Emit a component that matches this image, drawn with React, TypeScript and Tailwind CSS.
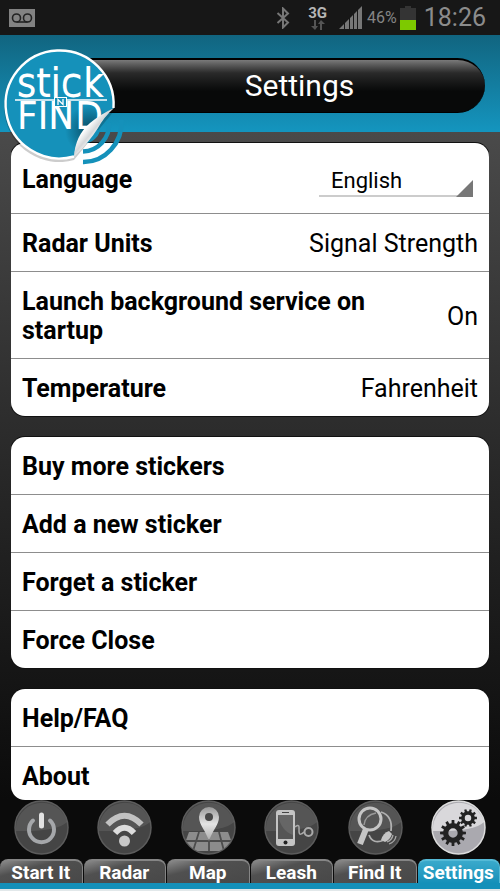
import React from 'react';
import clsx from 'clsx';

// Status bar at the top of the phone
function StatusBar() {
  return (
    <div className="flex h-[35px] shrink-0 items-center justify-between bg-[#171717] pr-[14px] pl-[9px] text-[#8a8a8a]">
      <svg width="26" height="18" viewBox="0 0 26 18" aria-label="Voicemail">
        <rect width="26" height="18" fill="#828282" />
        <g fill="none" stroke="#222" strokeWidth="1.6">
          <circle cx="7.5" cy="9" r="4" />
          <circle cx="18.5" cy="9" r="4" />
          <path d="M7.5 13h11" />
        </g>
      </svg>
      <div className="flex items-center">
        <svg className="mr-[18px]" width="14" height="22" viewBox="0 0 14 22" fill="none" stroke="#777" strokeWidth="2" aria-label="Bluetooth">
          <path d="M1.500 6 12 15.500 7 20.500V1.500L12 6.500 1.500 16" />
        </svg>
        <div className="mr-3 flex flex-col items-center">
          <span className="text-[15px] leading-[14px] font-bold text-[#b5b5b5]">3G</span>
          <svg width="14" height="10" viewBox="0 0 14 10" fill="#555">
            <path d="M3 0h2v6h2L4 10 0 6h3zM9 10h2V4h3L10 0 7 4h2z" />
          </svg>
        </div>
        <svg className="mr-1" width="24" height="23" viewBox="0 0 24 23" fill="#777" aria-label="Signal">
          <path d="M0 23 5 18V23zM6 23V17L10 13V23zM11 23V12L14 9V23zM15 23V8L18 5V23zM19 23V4L23 0V23z" />
        </svg>
        <span className="mr-[3px] text-base text-[#858585]">46%</span>
        <svg className="mr-2" width="16" height="24" viewBox="0 0 16 24" aria-label="Battery">
          <path d="M5 0h6v2h5v12H0V2h5z" fill="#343434" />
          <path d="M0 14h16v10H0z" fill="#7dc900" />
        </svg>
        <span className="text-[25px] leading-none text-[#8c8c8c]">18:26</span>
      </div>
    </div>
  );
}

function Logo() {
  return (
    <svg className="absolute top-2 left-0 z-10" width="132" height="124" viewBox="0 43 132 124" role="img" aria-label="Stick N Find">
      <defs>
        <linearGradient id="peel" x1="0" y1="0" x2="1" y2="1">
          <stop offset="0.35" stopColor="#fff" />
          <stop offset="0.47" stopColor="#d5d8da" />
          <stop offset="0.58" stopColor="#fff" />
        </linearGradient>
        <radialGradient id="peelShade" gradientUnits="userSpaceOnUse" cx="90" cy="130" r="25">
          <stop offset="0.2" stopColor="#063f54" stopOpacity="0.7" />
          <stop offset="1" stopColor="#063f54" stopOpacity="0" />
        </radialGradient>
        <clipPath id="disc">
          <path d="M114 108A54.500 54.500 0 1 0 74 157Q76 136 92 123 102 115 114 108Z" />
        </clipPath>
      </defs>
      <path d="M114 108A55 55 0 1 0 74 157Z" fill="#000" opacity="0.2" transform="translate(0 3)" />
      <path d="M114 108A54.500 54.500 0 1 0 74 157Q76 136 92 123 102 115 114 108Z" fill="#1591ba" />
      <g clipPath="url(#disc)">
        <circle cx="90" cy="130" r="25" fill="url(#peelShade)" />
        <g fill="#fff" stroke="#fff" strokeWidth="1.800" textAnchor="middle" fontFamily="'DejaVu Sans', sans-serif" fontWeight="200">
          <text x="60" y="96" fontSize="37">stick</text>
          <text x="60" y="128" fontSize="36">FIND</text>
        </g>
        <path d="M15 100h92" stroke="#fff" strokeWidth="1.300" />
        <rect x="54.500" y="97.500" width="12" height="9" fill="#1591ba" stroke="#fff" />
        <path d="M58 105V99.500L63 104.500V99" stroke="#fff" strokeWidth="1.300" fill="none" />
      </g>
      <path d="M113.500 108A54 54 0 1 0 74 156.500" fill="none" stroke="#fff" strokeWidth="2.400" />
      <g fill="none" stroke="#1591ba" strokeWidth="4.500">
        <path d="M98 130A15 15 0 0 1 83 141" />
        <path d="M109 123A27 27 0 0 1 83 151.500" />
        <path d="M121.500 120A38 40 0 0 1 83 162" />
      </g>
      <path d="M74 157Q75 136 90 123 101 114 114 108 104 117 98 128 90 141 74 157Z" fill="url(#peel)" />
    </svg>
  );
}

function Header() {
  return (
    <header className="relative z-10 shrink-0 bg-linear-to-b from-[#116580] to-[#1495bf] pt-[23px] pr-[15px] pb-[19px] pl-12">
      <Logo />
      <div className="flex h-[55px] items-center justify-center rounded-r-full border-t-2 border-b border-black bg-linear-to-b from-[#7a7a7a] via-[#2a2a2a] via-25% to-[#080909] to-60% pl-[66px]">
        <h1 className="text-[30px] leading-none text-white">Settings</h1>
      </div>
    </header>
  );
}

function Card({ children }: { children: React.ReactNode }) {
  return (
    <section className="shrink-0 divide-y divide-[#8d8d8d] overflow-hidden rounded-[14px] bg-white shadow-[0_0_0_1px_#111]">
      {children}
    </section>
  );
}

interface RowProps {
  label: string;
  value?: string;
}

function Row({ label, value }: RowProps) {
  return (
    <button type="button" className="flex w-full items-center justify-between px-[11px] pt-[15px] pb-[13px] text-left">
      <span className="max-w-[370px] text-[25px] leading-[29px] font-bold">{label}</span>
      {value && <span className="text-[25px] leading-[29px]">{value}</span>}
    </button>
  );
}

function LanguageRow() {
  return (
    <div className="flex h-[71px] items-center justify-between pr-4 pl-[11px]">
      <label htmlFor="language" className="pt-[3px] text-[25px] leading-[29px] font-bold">Language</label>
      <div className="relative mt-1 w-[154px] border-b-2 border-[#ccc]">
        <select id="language" className="block w-full appearance-none bg-transparent pt-1 pl-3 text-[22px] leading-7 outline-none">
          <option>English</option>
        </select>
        <svg className="pointer-events-none absolute right-0 -bottom-[2px]" width="17" height="17" viewBox="0 0 17 17">
          <path d="M17 0v17H0z" fill="#777" />
        </svg>
      </div>
    </div>
  );
}

// Toothed wheel outline with a hole in the middle
function gear(cx: number, cy: number, r: number, teeth: number) {
  const points: string[] = [];
  for (let i = 0; i < teeth; i++) {
    [[-0.28, 0.76], [-0.2, 1], [0.2, 1], [0.28, 0.76]].forEach(([shift, scale]) => {
      const a = ((i + shift) / teeth) * Math.PI * 2;
      points.push(`${(cx + Math.cos(a) * r * scale).toFixed(2)} ${(cy + Math.sin(a) * r * scale).toFixed(2)}`);
    });
  }
  const h = r * 0.36;
  return `M${points.join('L')}ZM${cx - h} ${cy}a${h} ${h} 0 1 0 ${h * 2} 0a${h} ${h} 0 1 0 ${-h * 2} 0Z`;
}

const icons: Record<string, React.ReactNode> = {
  'Start It': (
    <g fill="none" strokeLinecap="round">
      <path d="M19 20.500A12.500 12.500 0 1 0 36 20.500" stroke="#a5a7aa" strokeWidth="4" />
      <path d="M27.500 15v11" stroke="#e2e2e2" strokeWidth="5" />
    </g>
  ),
  Radar: (
    <g fill="none" stroke="#c2c2c2">
      <path d="M10.500 24.500Q27.500 7 44.500 24.500" strokeWidth="6" />
      <path d="M18 33Q27.500 22.500 37 33" stroke="#dcdcdc" strokeWidth="6" />
      <circle cx="27.500" cy="41" r="5.500" fill="#c8c8c8" stroke="none" />
    </g>
  ),
  Map: (
    <g clipPath="url(#round)">
      <path d="M8 32H47L54 51H1Z" fill="#8c8c8c" />
      <path d="M0 41H55M18 32 12 51M28 32V51M38 32 43 51" stroke="#4c4c4c" strokeWidth="1.800" />
      <path d="M28 41C25 31 18 25 18 17A10 10 0 0 1 38 17C38 25 31 31 28 41Z" fill="url(#metal)" />
      <circle cx="28" cy="17" r="4" fill="#484848" />
    </g>
  ),
  Leash: (
    <g>
      <rect x="12" y="10" width="19" height="36" rx="3" fill="#c4c4c4" />
      <rect x="14" y="15" width="15" height="24" fill="#555" />
      <path d="M14 15H29V35Q17 31 14 15Z" fill="#666" />
      <path d="M18 12.500h7" stroke="#444" />
      <circle cx="21.500" cy="42.500" r="2" fill="#222" />
      <g fill="none" stroke="#aaa" strokeWidth="1.500">
        <path d="M31 27C36 23 35 28 35 31 35 36 38 34 40 32" />
        <circle cx="44.500" cy="32" r="4" strokeWidth="2" />
      </g>
    </g>
  ),
  'Find It': (
    <g fill="none">
      <path d="M33 12Q45 16 43 31M21 35Q25 45 36 40" stroke="#b0b0b0" strokeWidth="1.800" />
      <path d="M39 42Q44 40 45 35M41 44Q47 42 48 36" stroke="#aaa" strokeWidth="1.300" />
      <path d="M33 40Q35 33 41 31L44 34Q42 40 37 42Z" fill="#c5c5c5" />
      <path d="M18 29 12 44" stroke="#c5c5c5" strokeWidth="6" />
      <circle cx="22" cy="19" r="11" stroke="#c5c5c5" strokeWidth="3" />
      <path d="M16 25Q17 15 28 13" stroke="#999" strokeWidth="1.500" />
    </g>
  ),
  Settings: (
    <g fill="#222" fillRule="evenodd">
      <path d={gear(22, 33, 13, 12)} />
      <path d={gear(37, 18, 9, 10)} />
    </g>
  ),
};

function Tab({ label, active }: { label: string; active?: boolean }) {
  return (
    <a href="#" aria-current={active ? 'page' : undefined} className="flex min-w-0 flex-1 flex-col items-center">
      <svg width="55" height="55" viewBox="0 0 55 55" aria-hidden="true">
        <circle cx="27.500" cy="27.500" r="26.500" fill={active ? '#aaa9af' : '#454545'} stroke={active ? '#ddd' : '#5c5c5c'} strokeWidth="1.500" />
        <path d="M2 31A26 26 0 0 1 53 22Q43 32 2 31Z" fill="#fff" opacity={active ? 0.55 : 0.09} />
        {icons[label]}
      </svg>
      <span
        className={clsx(
          'mt-1 h-6 w-full rounded-t-lg border-t-2 border-r text-center text-[19px] leading-6 font-bold whitespace-nowrap text-white',
          active
            ? 'border-[#55bad7] bg-linear-to-b from-[#39a9cb] to-[#1490b9]'
            : 'border-[#858585] bg-linear-to-br from-[#8c8c8c] via-[#505050] via-35% to-[#484848]'
        )}
      >
        {label}
      </span>
    </a>
  );
}

function BottomNav() {
  return (
    <nav className="shrink-0 border-b-2 border-[#e2e8ea] bg-[#0b0b0b]">
      <svg className="absolute" width="0" height="0" aria-hidden="true">
        <defs>
          <linearGradient id="metal" x1="0" y1="0" x2="0" y2="1">
            <stop stopColor="#999" />
            <stop offset="0.5" stopColor="#e4e4e4" />
            <stop offset="1" stopColor="#aaa" />
          </linearGradient>
          <clipPath id="round">
            <circle cx="27.500" cy="27.500" r="26" />
          </clipPath>
        </defs>
      </svg>
      <div className="flex gap-px border-b-[6px] border-[#1490b9]">
        {Object.keys(icons).map((label) => (
          <Tab key={label} label={label} active={label === 'Settings'} />
        ))}
      </div>
    </nav>
  );
}

export default function App() {
  return (
    <div className="flex h-screen flex-col bg-black font-[Roboto,sans-serif] text-black">
      <StatusBar />
      <Header />
      <main className="flex min-h-0 flex-1 flex-col bg-linear-to-b from-[#4a4a4a] to-[#0b0b0b] px-[11px]">
        {/* Scrolling list of settings */}
        <div className="flex min-h-0 flex-1 flex-col gap-[21px] overflow-y-auto rounded-b-[14px] pt-[11px] [scrollbar-width:none]">
          <Card>
            <LanguageRow />
            <Row label="Radar Units" value="Signal Strength" />
            <Row label="Launch background service on startup" value="On" />
            <Row label="Temperature" value="Fahrenheit" />
          </Card>
          <Card>
            <Row label="Buy more stickers" />
            <Row label="Add a new sticker" />
            <Row label="Forget a sticker" />
            <Row label="Force Close" />
          </Card>
          <Card>
            <Row label="Help/FAQ" />
            <Row label="About" />
          </Card>
        </div>
      </main>
      <BottomNav />
    </div>
  );
}
